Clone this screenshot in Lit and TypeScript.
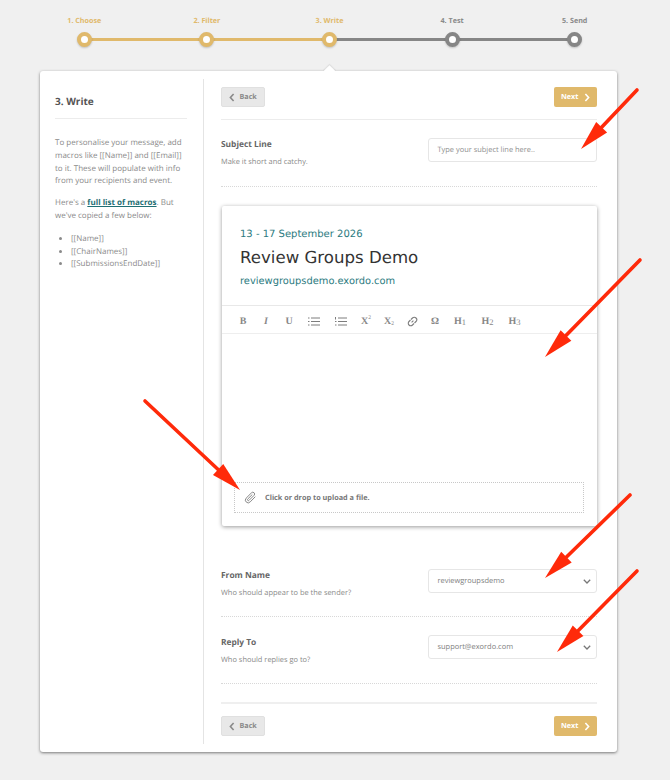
import { LitElement, html, css, svg } from "lit";
import { customElement } from "lit/decorators.js";

const steps = [
  { label: "1. Choose", on: true },
  { label: "2. Filter", on: true },
  { label: "3. Write", on: true },
  { label: "4. Test", on: false },
  { label: "5. Send", on: false },
];

const arrows = [
  [637, 90, 581, 149],
  [640, 260, 545, 357],
  [145, 401, 240, 490],
  [630, 495, 545, 578],
  [637, 571, 557, 652],
];

function arrow([x1, y1, x2, y2]: number[]) {
  const d = Math.hypot(x2 - x1, y2 - y1);
  const ux = (x2 - x1) / d;
  const uy = (y2 - y1) / d;
  const bx = x2 - ux * 30;
  const by = y2 - uy * 30;
  const nx = 7.5 * -uy;
  const ny = 7.5 * ux;
  return svg`
    <line x1=${x1} y1=${y1} x2=${bx} y2=${by} stroke="#ff2a0a" stroke-width="3.6" stroke-linecap="round"></line>
    <polygon fill="#ff2a0a" points="${x2},${y2} ${bx + nx},${by + ny} ${bx - nx},${by - ny}"></polygon>`;
}

const left = html`<svg class="chev" width="6" height="9" viewBox="0 0 6 9"><path d="M4.6 1 1.4 4.5 4.6 8" fill="none" stroke="currentColor" stroke-width="1.6"/></svg>`;
const right = html`<svg class="chev" width="6" height="9" viewBox="0 0 6 9"><path d="M1.4 1 4.6 4.5 1.4 8" fill="none" stroke="currentColor" stroke-width="1.6"/></svg>`;
const down = html`<svg width="8" height="5" viewBox="0 0 8 5"><path d="M.8.8 4 4 7.200.8" fill="none" stroke="#777" stroke-width="1.3"/></svg>`;

@customElement("app-root")
export class AppRoot extends LitElement {
  static styles = css`
    :host {
      display: block;
      position: relative;
      width: 670px;
      height: 780px;
      overflow: hidden;
      background: #f0f0f0;
      font-family: "Open Sans", "Liberation Sans", sans-serif;
      font-size: 8px;
      color: #8a8a8a;
      text-rendering: geometricPrecision;
    }
    .stepper {
      display: flex;
      padding: 15px 0 0 23px;
      height: 56px;
      box-sizing: border-box;
    }
    .step {
      width: 122.6px;
      display: flex;
      flex-direction: column;
      align-items: center;
      position: relative;
      color: #8a8a8a;
      font-size: 7.2px;
      font-weight: 700;
    }
    .step.on { color: #e0b96b; }
    .step-label { line-height: 12px; height: 12px; }
    .dot {
      box-sizing: border-box;
      width: 15px;
      height: 15px;
      margin-top: 5px;
      border-radius: 50%;
      background: #fff;
      border: 4px solid #868686;
      box-shadow: 0 1px 2px rgba(0, 0, 0, 0.2);
      position: relative;
      z-index: 1;
    }
    .step.on .dot { border-color: #e0b96b; }
    .seg {
      position: absolute;
      top: 22.5px;
      left: 50%;
      width: 100%;
      height: 3px;
      background: #868686;
    }
    .step.on .seg.gold { background: #e0b96b; }
    .card {
      position: relative;
      box-sizing: border-box;
      margin: 15px 0 0 40px;
      width: 577px;
      height: 681px;
      padding: 8px 0;
      background: #fff;
      border-radius: 3px;
      box-shadow: 0 1px 3px rgba(0, 0, 0, 0.5);
      display: flex;
    }
    .notch {
      position: absolute;
      top: -4.5px;
      left: 284.500px;
      width: 9px;
      height: 9px;
      background: #fff;
      transform: rotate(45deg);
      box-shadow: -1px -1px 1px rgba(0, 0, 0, 0.08);
    }
    .side {
      box-sizing: border-box;
      width: 164px;
      padding: 0 16px 0 15px;
      border-right: 1px solid #e4e4e4;
      line-height: 12.8px;
    }
    .side h2 {
      margin: 0;
      height: 40px;
      box-sizing: border-box;
      padding-top: 15px;
      border-bottom: 1px solid #ececec;
      font-size: 10px;
      line-height: 14px;
      font-weight: 700;
      color: #555;
    }
    .side p { margin: 18px 0 0; }
    .side p + p { margin-top: 9px; }
    .side a { color: #1f6f74; font-weight: 700; text-decoration: underline; }
    .side ul { margin: 10px 0 0; padding: 0 0 0 16px; }
    .main {
      position: relative;
      z-index: 1;
      box-sizing: border-box;
      flex: 1;
      padding: 0 20px 0 17px;
      background: transparent;
    }
    .bar { display: flex; justify-content: space-between; align-items: center; }
    .bar.top {
      height: 41px;
      padding-bottom: 4px;
      box-sizing: border-box;
      border-bottom: 1px solid #ececec;
    }
    .bar.bottom {
      margin-top: 18px;
      height: 41px;
      padding-top: 5px;
      box-sizing: border-box;
      border-top: 2px solid #efefef;
    }
    .btn {
      box-sizing: border-box;
      height: 20px;
      display: inline-flex;
      align-items: center;
      border-radius: 2px;
      font-size: 7.2px;
      font-weight: 700;
    }
    .back {
      width: 44px;
      padding-left: 7px;
      gap: 4.5px;
      background: #e8e8e8;
      border: 1px solid #e0e0e0;
      color: #8a8a8a;
    }
    .next {
      width: 43px;
      padding-left: 7px;
      gap: 6px;
      background: #e0b96b;
      color: #fff;
    }
    .row {
      display: flex;
      justify-content: space-between;
      box-sizing: border-box;
      padding-top: 18px;
      border-bottom: 1px dotted #d8d8d8;
    }
    .row.reply .text { margin-top: 1px; }
    .label { font-size: 8.4px; line-height: 13px; font-weight: 700; color: #666; }
    .hint { font-size: 7.45px; line-height: 12px; margin-top: 5px; color: #8a8a8a; }
    .field {
      box-sizing: border-box;
      width: 169px;
      height: 23.500px;
      padding: 1px 5px 0 8.500px;
      display: flex;
      align-items: center;
      justify-content: space-between;
      border: 1px solid #e6e6e6;
      border-radius: 3px;
      font-size: 7.45px;
      color: #808080;
    }
    .row.subject { height: 67px; }
    .row.from { height: 66px; }
    .row.reply { height: 67px; }
    .row.subject .field { color: #8f8f8f; }
    .editor {
      box-sizing: border-box;
      margin: 19px 0 25px 1px;
      height: 320px;
      border-radius: 2px;
      box-shadow: 0 1px 4px rgba(0, 0, 0, 0.4);
      display: flex;
      flex-direction: column;
    }
    .head {
      box-sizing: border-box;
      height: 100px;
      padding: 22px 18px 0;
      font-family: "DejaVu Sans", Verdana, sans-serif;
      border-bottom: 1px solid #e8e8e8;
    }
    .date { font-size: 10px; line-height: 14px; color: #2b7a80; }
    .title { font-size: 16.6px; line-height: 24px; margin-top: 4px; color: #333; }
    .url { font-size: 9.900px; line-height: 14px; margin-top: 5px; color: #2b7a80; }
    .tools {
      box-sizing: border-box;
      height: 28px;
      padding-left: 9.5px;
      padding-top: 3px;
      display: flex;
      align-items: center;
      border-bottom: 1px solid #eeeeee;
      font-family: "Liberation Serif", "Times New Roman", serif;
      font-size: 10px;
      font-weight: 700;
      color: #888;
    }
    .tool {
      width: 23px;
      flex: none;
      display: flex;
      justify-content: center;
      align-items: center;
    }
    .tool.w26 { width: 26px; }
    .tool.w27 { width: 27px; }
    .tool.w28 { width: 28px; }
    .tool.i { font-style: italic; }
    .tool sup, .tool sub { font-size: 5.5px; line-height: 0; font-weight: 400; }
    .tool sup { margin-bottom: 6px; }
    .tool sub { margin-top: 6px; }
    .tool.h span { font-size: 8.5px; font-weight: 400; margin-top: 1px; }
    .space { flex: 1; }
    .upload {
      box-sizing: border-box;
      margin: 0 13px 13px 12px;
      height: 31px;
      padding-left: 9px;
      display: flex;
      align-items: center;
      gap: 8px;
      border: 1px dotted #c8c8c8;
      font-size: 7.3px;
      font-weight: 700;
      color: #777;
    }
    .arrows {
      position: absolute;
      inset: 0;
      z-index: 5;
      pointer-events: none;
    }
  `;

  render() {
    return html`
      <div class="stepper">
        ${steps.map(
          (s, i) => html`<div class="step ${s.on ? "on" : ""}">
            <div class="step-label">${s.label}</div>
            <div class="dot"></div>
            ${i < 4 ? html`<div class="seg ${steps[i + 1].on ? "gold" : ""}"></div>` : ""}
          </div>`,
        )}
      </div>
      <div class="card">
        <div class="notch"></div>
        <aside class="side">
          <h2>3. Write</h2>
          <p>To personalise your message, add macros like [[Name]] and [[Email]] to it. These will populate with info from your recipients and event.</p>
          <p>Here's a <a>full list of macros</a>. But we've copied a few below:</p>
          <ul>
            <li>[[Name]]</li>
            <li>[[ChairNames]]</li>
            <li>[[SubmissionsEndDate]]</li>
          </ul>
        </aside>
        <div class="main">
          <div class="bar top">
            <span class="btn back">${left}Back</span>
            <span class="btn next">Next${right}</span>
          </div>
          <div class="row subject">
            <div class="text">
              <div class="label">Subject Line</div>
              <div class="hint">Make it short and catchy.</div>
            </div>
            <div class="field">Type your subject line here..</div>
          </div>
          <div class="editor">
            <div class="head">
              <div class="date">13 - 17 September 2026</div>
              <div class="title">Review Groups Demo</div>
              <div class="url">reviewgroupsdemo.exordo.com</div>
            </div>
            <div class="tools">
              <span class="tool">B</span>
              <span class="tool i">I</span>
              <span class="tool">U</span>
              <span class="tool w26"><svg width="12" height="9" viewBox="0 0 12 9"><path d="M3 1h9M3 4.5h9M3 8h9M0 1h1.5M0 4.5h1.5M0 8h1.5" stroke="#7d7d7d" fill="none"/></svg></span>
              <span class="tool w28"><svg width="12" height="9" viewBox="0 0 12 9"><path d="M3 1h9M3 4.5h9M3 8h9M.5 0v2.500M0 4.500h1.500M0 8h1.500" stroke="#7d7d7d" fill="none"/></svg></span>
              <span class="tool">X<sup>2</sup></span>
              <span class="tool">X<sub>2</sub></span>
              <span class="tool"><svg width="11" height="11" viewBox="0 0 11 11"><path d="M4.600 6.400 6.400 4.600M4 3.500 5.500 2A2 2 0 0 1 9 5.500L7.500 7M7 7.500 5.500 9A2 2 0 0 1 2 5.500L3.500 4" stroke="#7d7d7d" stroke-width="1.100" fill="none"/></svg></span>
              <span class="tool">Ω</span>
              <span class="tool h w27">H<span>1</span></span>
              <span class="tool h w28">H<span>2</span></span>
              <span class="tool h w26">H<span>3</span></span>
            </div>
            <div class="space"></div>
            <div class="upload">
              <svg width="13" height="13" viewBox="0 0 13 13"><path d="M11.300 5.700 6.200 10.900A2.600 2.600 0 0 1 2.100 7.200L7.500 1.800A1.800 1.800 0 0 1 10.100 4.300L5 9.400A.9.900 0 0 1 3.700 8.100L8.300 3.500" fill="none" stroke="#8a8a8a" stroke-width="1"/></svg>
              Click or drop to upload a file.
            </div>
          </div>
          <div class="row from">
            <div class="text">
              <div class="label">From Name</div>
              <div class="hint">Who should appear to be the sender?</div>
            </div>
            <div class="field">reviewgroupsdemo${down}</div>
          </div>
          <div class="row reply">
            <div class="text">
              <div class="label">Reply To</div>
              <div class="hint">Who should replies go to?</div>
            </div>
            <div class="field">support@exordo.com${down}</div>
          </div>
          <div class="bar bottom">
            <span class="btn back">${left}Back</span>
            <span class="btn next">Next${right}</span>
          </div>
        </div>
      </div>
      <svg class="arrows" width="670" height="780" viewBox="0 0 670 780">${arrows.map(arrow)}</svg>
    `;
  }
}
